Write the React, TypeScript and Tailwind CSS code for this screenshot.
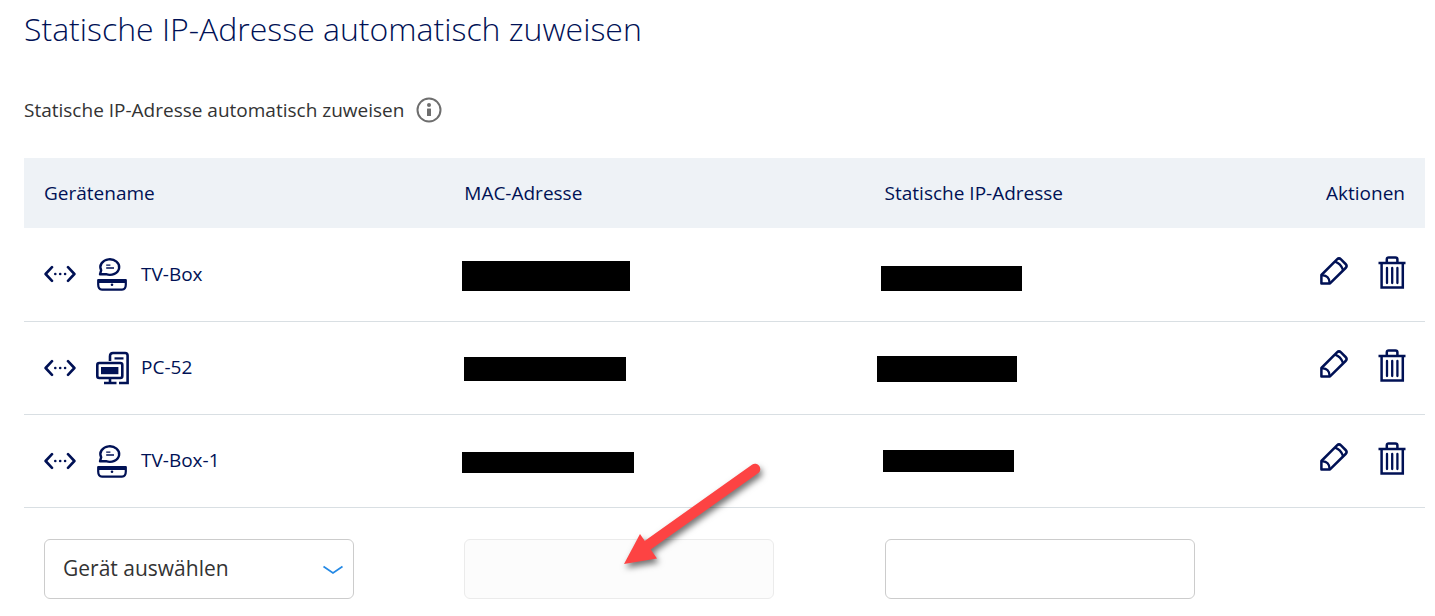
import * as React from "react";

interface Device {
  name: string;
  type: "tv" | "pc";
  macMask: string;
  ipMask: string;
}

const devices: Device[] = [
  {
    name: "TV-Box",
    type: "tv",
    macMask: "-ml-0.5 mt-1 h-[30px] w-[168px]",
    ipMask: "-ml-1 mt-2 h-[25px] w-[141px]",
  },
  {
    name: "PC-52",
    type: "pc",
    macMask: "mt-0.5 h-6 w-[162px]",
    ipMask: "-ml-2 mt-0.5 h-[26px] w-[140px]",
  },
  {
    name: "TV-Box-1",
    type: "tv",
    macMask: "-ml-0.5 mt-1 h-[21px] w-[172px]",
    ipMask: "-ml-0.5 h-[22px] w-[131px]",
  },
];

function InfoIcon() {
  return (
    <svg width="26" height="26" viewBox="0 0 26 26" fill="none" aria-hidden="true">
      <circle cx="13" cy="13" r="11.5" stroke="#6e6e6e" strokeWidth="2" />
      <circle cx="13" cy="8" r="2" fill="#6e6e6e" />
      <rect x="11" y="11.5" width="4" height="7.5" rx="0.5" fill="#6e6e6e" />
    </svg>
  );
}

function LanIcon() {
  return (
    <svg width="32" height="18" viewBox="0 0 32 18" fill="none" aria-hidden="true">
      <path
        d="M8 2.2L1.6 9L8 15.8M24 2.2L30.4 9L24 15.8"
        stroke="#001155"
        strokeWidth="2.6"
        strokeLinecap="round"
        strokeLinejoin="round"
      />
      <circle cx="11.3" cy="9" r="1.3" fill="#001155" />
      <circle cx="16.2" cy="9" r="1.3" fill="#001155" />
      <circle cx="21.1" cy="9" r="1.3" fill="#001155" />
    </svg>
  );
}

function TvBoxIcon() {
  return (
    <svg width="32" height="34" viewBox="0 0 32 34" fill="none" aria-hidden="true">
      <path
        d="M4 17.3L5.2 13.2A9.4 7.8 0 1 1 10 17.2Z"
        stroke="#001155"
        strokeWidth="2.4"
        strokeLinejoin="round"
      />
      <path d="M10.2 8.2H14.4M10.2 11H18" stroke="#001155" strokeWidth="1.3" />
      <path
        d="M2.2 23.2H29.8V27.6C29.8 30.8 28.4 32.6 26 32.6H6C3.6 32.6 2.2 30.8 2.2 27.6Z"
        stroke="#001155"
        strokeWidth="2.2"
        strokeLinejoin="round"
      />
      <rect x="2" y="22" width="28" height="4" rx="1" fill="#001155" />
      <circle cx="16" cy="27.8" r="1.3" fill="#001155" />
    </svg>
  );
}

function PcIcon() {
  return (
    <svg width="33" height="34" viewBox="0 0 33 34" fill="none" aria-hidden="true">
      <path
        d="M14 10V5.2C14 3 15.2 2 17 2H29C31 2 31.6 2.8 31.6 4.6V32H23"
        stroke="#001155"
        strokeWidth="2.6"
      />
      <path d="M18.5 7.4H27.5" stroke="#001155" strokeWidth="2.2" />
      <rect x="1.3" y="12" width="25" height="15" rx="2" stroke="#001155" strokeWidth="2.6" />
      <rect x="5" y="16" width="17.4" height="7.2" fill="#001155" />
      <path d="M14 27V32M8 32H20.5" stroke="#001155" strokeWidth="2.6" />
    </svg>
  );
}

function PencilIcon() {
  return (
    <svg width="28" height="29" viewBox="0 -1 28 29" fill="none" aria-hidden="true">
      <path
        d="M1.4 26.4V18L17 2.4C18.2 1.2 19.8 1.2 21 2.4L25.6 7C26.8 8.2 26.8 9.8 25.6 11L10 26.4Z"
        stroke="#001155"
        strokeWidth="2.5"
        strokeLinejoin="round"
      />
      <path
        d="M2 18.4C6.6 18 9.8 21.2 9.6 26M15.2 4.6C18.4 5.8 21.6 9 23 12.8"
        stroke="#001155"
        strokeWidth="2.4"
      />
    </svg>
  );
}

function TrashIcon() {
  return (
    <svg width="28" height="33" viewBox="0 0 28 33" fill="none" aria-hidden="true">
      <path
        d="M0.5 7H27.5M3.6 7V31.4H24.8V7M8.8 6.5V3.4C8.8 2 9.4 1.4 10.8 1.4H17.4C18.8 1.4 19.4 2 19.4 3.4V6.5"
        stroke="#001155"
        strokeWidth="2.5"
      />
      <path
        d="M9 12V27M14.2 12V27M19.4 12V27"
        stroke="#001155"
        strokeWidth="2.3"
        strokeLinecap="round"
      />
    </svg>
  );
}

function Pointer() {
  return (
    <svg
      className="pointer-events-none absolute -top-[79px] left-[156px] drop-shadow-[2px_4px_3px_rgba(0,0,0,0.55)]"
      width="150"
      height="116"
      viewBox="0 0 150 116"
      fill="none"
      aria-hidden="true"
    >
      <path d="M135 9L28 85" stroke="#fd4343" strokeWidth="10.5" strokeLinecap="round" />
      <path d="M4 104L20 74L37 98.5Z" fill="#fd4343" />
    </svg>
  );
}

function DeviceRow({ device }: { device: Device }) {
  return (
    <tr className="h-[93px] border-b border-[#d9dfe3]">
      <td className="px-5">
        <div className="flex items-center">
          <LanIcon />
          <span className="ml-5 mr-3 w-[33px]">
            {device.type === "tv" ? <TvBoxIcon /> : <PcIcon />}
          </span>
          {device.name}
        </div>
      </td>
      <td className="px-5">
        <div className={`bg-black ${device.macMask}`} />
      </td>
      <td className="px-5">
        <div className={`bg-black ${device.ipMask}`} />
      </td>
      <td className="pr-[19px]">
        <div className="-mt-1 flex items-start justify-end gap-[30px]">
          <button type="button" aria-label={`${device.name} bearbeiten`}>
            <PencilIcon />
          </button>
          <button type="button" aria-label={`${device.name} löschen`}>
            <TrashIcon />
          </button>
        </div>
      </td>
    </tr>
  );
}

export default function App() {
  return (
    <main className="bg-white pl-6 pr-[10px] font-['Open_Sans',sans-serif] text-[19px] text-[#001155]">
      <h1 className="pt-1 text-[32px] font-light leading-[50px]">
        Statische IP-Adresse automatisch zuweisen
      </h1>

      <div className="mt-9 flex h-10 items-center gap-3 text-[#333333]">
        <span>Statische IP-Adresse automatisch zuweisen</span>
        <button type="button" aria-label="Information">
          <InfoIcon />
        </button>
      </div>

      <table className="mt-7 w-full table-fixed border-collapse text-left">
        <thead>
          <tr className="h-[70px] bg-[#eef2f6]">
            <th className="w-[30%] px-5 font-normal">Gerätename</th>
            <th className="w-[30%] px-5 font-normal">MAC-Adresse</th>
            <th className="w-[30%] px-5 font-normal">Statische IP-Adresse</th>
            <th className="px-5 text-right font-normal">Aktionen</th>
          </tr>
        </thead>
        <tbody>
          {devices.map((device) => (
            <DeviceRow key={device.name} device={device} />
          ))}
          <tr>
            <td className="px-5 pt-[31px]">
              <div className="relative w-[310px]">
                <select
                  aria-label="Gerät auswählen"
                  className="h-[60px] w-full appearance-none rounded-md border border-[#cccccc] bg-white px-[18px] text-[21px] text-[#333333]"
                >
                  <option>Gerät auswählen</option>
                </select>
                <svg
                  className="pointer-events-none absolute right-2.5 top-[26px]"
                  width="22"
                  height="10"
                  viewBox="0 0 22 10"
                  fill="none"
                  aria-hidden="true"
                >
                  <path d="M1.5 1.5L11 8L20.5 1.5" stroke="#2489e5" strokeWidth="1.7" />
                </svg>
              </div>
            </td>
            <td className="px-5 pt-[31px]">
              <div className="relative w-[310px]">
                <input
                  type="text"
                  disabled
                  aria-label="MAC-Adresse"
                  className="block h-[60px] w-full rounded-md border border-[#ebebeb] bg-[#fcfcfc] px-[18px] text-[21px]"
                />
                <Pointer />
              </div>
            </td>
            <td className="px-5 pt-[31px]">
              <input
                type="text"
                aria-label="Statische IP-Adresse"
                className="block h-[60px] w-[310px] rounded-md border border-[#cccccc] bg-white px-[18px] text-[21px]"
              />
            </td>
            <td />
          </tr>
        </tbody>
      </table>
    </main>
  );
}
